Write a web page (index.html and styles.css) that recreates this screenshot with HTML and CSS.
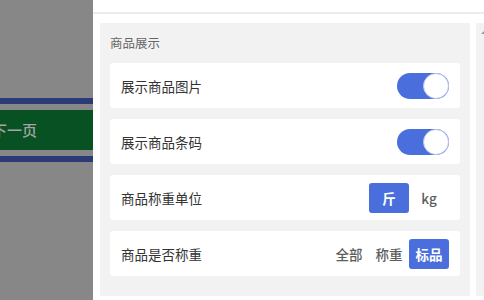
FILE: index.html
```html
<!DOCTYPE html>
<html lang="zh-CN">
<head>
    <meta charset="UTF-8">
    <meta name="viewport" content="width=device-width, initial-scale=1.0">
    <title>商品展示设置</title>
    <link rel="stylesheet" href="styles.css">
</head>
<body>
    <div class="backdrop">
        <div class="pager">
            <div class="pager-btn">下一页</div>
        </div>
    </div>

    <div class="drawer">
        <div class="drawer-header"></div>
        <div class="drawer-body">
            <div class="section">
                <div class="section-title">商品展示</div>

                <div class="setting-row">
                    <span class="label">展示商品图片</span>
                    <span class="switch on"><span class="knob"></span></span>
                </div>

                <div class="setting-row">
                    <span class="label">展示商品条码</span>
                    <span class="switch on"><span class="knob"></span></span>
                </div>

                <div class="setting-row">
                    <span class="label">商品称重单位</span>
                    <div class="options">
                        <span class="option active">斤</span>
                        <span class="option">kg</span>
                    </div>
                </div>

                <div class="setting-row">
                    <span class="label">商品是否称重</span>
                    <div class="options">
                        <span class="option">全部</span>
                        <span class="option">称重</span>
                        <span class="option active">标品</span>
                    </div>
                </div>
            </div>
            <div class="scroll-col"><span class="scroll-arrow"></span></div>
        </div>
    </div>
</body>
</html>
```

FILE: styles.css
```css
body {
    margin: 0;
    height: 300px;
    overflow: hidden;
    display: flex;
    font-family: "Noto Sans CJK SC", "Noto Sans", sans-serif;
    color: #333;
}
.backdrop {
    width: 93px;
    flex-shrink: 0;
    background-color: #878787;
    padding-top: 98px;
    overflow: hidden;
}
.pager {
    border-top: 6px solid #2c3b78;
    border-bottom: 6px solid #2c3b78;
    padding: 6px 0;
}
.pager-btn {
    height: 40px;
    line-height: 40px;
    background-color: #075122;
    color: #a3a6a4;
    font-size: 15px;
    font-weight: 500;
    padding-left: 0;
    text-indent: -8px;
    white-space: nowrap;
}
.drawer {
    flex: 1;
    background-color: #fff;
    display: flex;
    flex-direction: column;
}
.drawer-header {
    height: 12px;
    border-bottom: 2px solid #ececec;
}
.drawer-body {
    flex: 1;
    display: flex;
    gap: 6px;
    padding: 9px 0 4px 7px;
}
.section {
    width: 350px;
    background-color: #f2f2f2;
    padding: 10px 10px 0;
}
.section-title {
    font-size: 12.5px;
    line-height: 20px;
    color: #666;
    margin-bottom: 10px;
}
.setting-row {
    height: 45px;
    background-color: #fff;
    border-radius: 3px;
    display: flex;
    align-items: center;
    justify-content: space-between;
    padding: 0 11px;
    margin-bottom: 11px;
}
.label {
    font-size: 13.5px;
}
.switch {
    width: 52px;
    height: 26px;
    border-radius: 13px;
    background-color: #4a6fdc;
    display: flex;
    align-items: center;
    justify-content: flex-end;
    box-sizing: border-box;
}
.knob {
    width: 26px;
    height: 26px;
    border-radius: 50%;
    background-color: #fff;
    border: 1px solid #b9c5ee;
    box-sizing: border-box;
}
.options {
    display: flex;
}
.option {
    width: 40px;
    height: 30px;
    line-height: 30px;
    text-align: center;
    font-size: 13.5px;
    font-weight: 500;
    color: #5c5c5c;
    border-radius: 3px;
}
.option.active {
    background-color: #4a6fdc;
    color: #fff;
    font-weight: bold;
}
.scroll-col {
    flex: 1;
    background-color: #f2f2f2;
    position: relative;
}
.scroll-arrow {
    position: absolute;
    top: 7px;
    left: 5px;
    border-left: 4px solid transparent;
    border-bottom: 4px solid #999;
}
```
